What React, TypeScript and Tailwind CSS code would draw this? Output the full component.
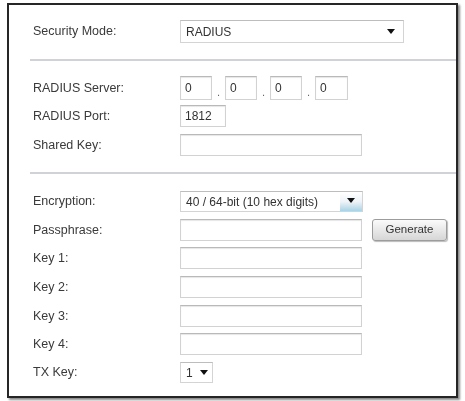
import React from "react";

const Arrow = () => (
  <span className="inline-block w-0 h-0 border-l-[4px] border-r-[4px] border-t-[5px] border-l-transparent border-r-transparent border-t-[#111]" />
);

const Label = ({ children }: { children: React.ReactNode }) => (
  <div className="w-[171px] shrink-0 pl-[24px] text-[12.5px] text-[#3a3a3a] leading-none">{children}</div>
);

const Field = ({ w, h = "h-[22px]", children }: { w: string; h?: string; children?: React.ReactNode }) => (
  <div className={`${w} ${h} border border-[#d2d2d2] border-t-[#b9b9b9] bg-white shadow-[inset_0_1px_1px_#e6e6e6] flex items-center px-[4px] text-[12px] text-[#333]`}>
    {children}
  </div>
);

export default function App() {
  return (
    <div className="w-[465px] h-[401px] bg-white pt-[3px] pl-[7px]" style={{ fontFamily: '"Liberation Sans", Arial, sans-serif' }}>
      <div className="w-[451px] h-[395px] border-2 border-[#262626] shadow-[2px_2px_2px_#8a8a8a] bg-white flex flex-col blur-[0.4px]">
        {/* Security Mode */}
        <div className="flex items-center mt-[15px]">
          <Label>Security Mode:</Label>
          <div className="w-[224px] h-[23px] border border-[#d4d4d4] border-t-[#bdbdbd] bg-white flex items-center justify-between pl-[5px] pr-[8px] text-[12px] text-[#333]">
            <span>RADIUS</span>
            <Arrow />
          </div>
        </div>
        <div className="mt-[16px] ml-[21px] h-[2px] bg-[#cfd3d7]" />

        {/* RADIUS Server */}
        <div className="flex items-center mt-[15px]">
          <Label>RADIUS Server:</Label>
          <div className="flex items-end">
            <Field w="w-[32px]" h="h-[24px]">0</Field>
            <span className="w-[13px] text-center text-[11px] text-[#666] leading-none pb-[2px]">.</span>
            <Field w="w-[32px]" h="h-[24px]">0</Field>
            <span className="w-[13px] text-center text-[11px] text-[#666] leading-none pb-[2px]">.</span>
            <Field w="w-[32px]" h="h-[24px]">0</Field>
            <span className="w-[13px] text-center text-[11px] text-[#666] leading-none pb-[2px]">.</span>
            <Field w="w-[33px]" h="h-[24px]">0</Field>
          </div>
        </div>

        <div className="flex items-center mt-[5px]">
          <Label>RADIUS Port:</Label>
          <Field w="w-[46px]">1812</Field>
        </div>

        <div className="flex items-center mt-[7px]">
          <Label>Shared Key:</Label>
          <Field w="w-[182px]" />
        </div>

        <div className="mt-[16px] ml-[21px] h-[2px] bg-[#cfd3d7]" />

        {/* Encryption */}
        <div className="flex items-center mt-[17px]">
          <Label>Encryption:</Label>
          <div className="w-[183px] h-[21px] border border-[#d4d4d4] border-t-[#bdbdbd] bg-white flex items-center justify-between pl-[5px] text-[12px] text-[#333]">
            <span>40 / 64-bit (10 hex digits)</span>
            <div className="w-[22px] h-full flex flex-col items-center justify-start pt-[6px] bg-gradient-to-b from-white via-[#eef4f8] to-[#a9d3e6]">
              <Arrow />
            </div>
          </div>
        </div>

        <div className="flex items-center mt-[7px]">
          <Label>Passphrase:</Label>
          <Field w="w-[182px]" />
          <button className="ml-[10px] w-[75px] h-[22px] rounded-[3px] border border-[#9c9c9c] bg-gradient-to-b from-[#fbfbfb] to-[#d6d6d6] text-[11.5px] text-[#333] leading-none shadow-[1px_1px_1px_#bbb]">
            Generate
          </button>
        </div>

        <div className="flex items-center mt-[6px]">
          <Label>Key 1:</Label>
          <Field w="w-[182px]" />
        </div>
        <div className="flex items-center mt-[7px]">
          <Label>Key 2:</Label>
          <Field w="w-[182px]" />
        </div>
        <div className="flex items-center mt-[7px]">
          <Label>Key 3:</Label>
          <Field w="w-[182px]" />
        </div>
        <div className="flex items-center mt-[6px]">
          <Label>Key 4:</Label>
          <Field w="w-[182px]" />
        </div>

        <div className="flex items-center mt-[7px]">
          <Label>TX Key:</Label>
          <div className="w-[33px] h-[21px] border border-[#d4d4d4] border-t-[#bdbdbd] bg-white flex items-center justify-between pl-[5px] pr-[4px] text-[12px] text-[#333]">
            <span>1</span>
            <Arrow />
          </div>
        </div>
      </div>
    </div>
  );
}
